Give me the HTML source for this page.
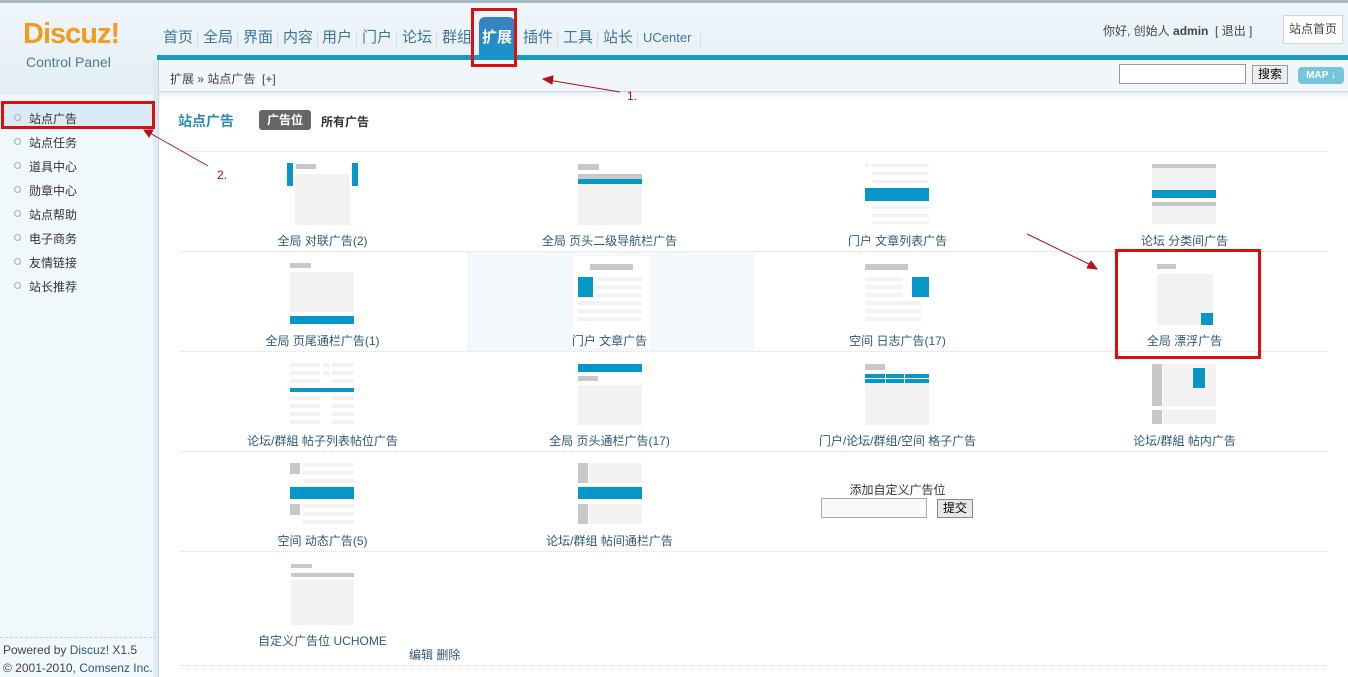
<!DOCTYPE html>
<html><head><meta charset="utf-8"><style>
*{margin:0;padding:0;box-sizing:border-box}
body{width:1348px;height:677px;position:relative;overflow:hidden;background:#fff;font-family:"Liberation Sans","Noto Sans CJK SC",sans-serif;font-size:12px;color:#333}
.a{position:absolute}
.r{position:absolute}
.b{background:#0796c8}.g{background:#c8c8c8}.l{background:#f2f2f2}
.ic{position:absolute;width:64px;height:62px}
.lab{position:absolute;width:287px;text-align:center;color:#2d5877;font-size:12px}
.hl{position:absolute;left:179px;width:1149px;border-top:1px dotted #dcdcdc;height:0}
.nv{position:absolute;top:29px;font-size:15px;color:#3c7598;line-height:18px;white-space:nowrap}
.sp{position:absolute;top:31px;width:1px;height:16px;background:#cfdde7}
.side div{position:absolute;left:14px;font-size:12px;color:#333}
.side div:before{content:"";display:inline-block;width:5px;height:5px;border:1px solid #aaa;border-radius:50%;margin-right:8px;vertical-align:2px}
.red{position:absolute;border:3px solid #d91010}
</style></head><body>
<!-- header -->
<div class="a" style="left:0;top:0;width:1348px;height:3px;background:#a6b8c6"></div>
<div class="a" style="left:0;top:3px;width:1348px;height:92px;background:linear-gradient(#f0f6fa,#e3eef6)"></div>
<div class="a" style="left:23px;top:18px;font-size:29px;font-weight:bold;color:#f39a1f;letter-spacing:-1px">Discuz!</div>
<div class="a" style="left:26px;top:54px;font-size:14px;color:#4a7a99">Control Panel</div>
<div class="a" style="left:479px;top:17px;width:36px;height:41px;background:linear-gradient(#3c7fbf,#1596cb);border-radius:6px 6px 0 0"></div>
<div class="nv" style="left:163px">首页</div><div class="sp" style="left:197px"></div>
<div class="nv" style="left:203px">全局</div><div class="sp" style="left:237px"></div>
<div class="nv" style="left:243px">界面</div><div class="sp" style="left:277px"></div>
<div class="nv" style="left:283px">内容</div><div class="sp" style="left:317px"></div>
<div class="nv" style="left:322px">用户</div><div class="sp" style="left:356px"></div>
<div class="nv" style="left:362px">门户</div><div class="sp" style="left:396px"></div>
<div class="nv" style="left:402px">论坛</div><div class="sp" style="left:436px"></div>
<div class="nv" style="left:442px">群组</div>
<div class="nv" style="left:482px;color:#fff;font-weight:bold">扩展</div>
<div class="nv" style="left:523px">插件</div><div class="sp" style="left:557px"></div>
<div class="nv" style="left:563px">工具</div><div class="sp" style="left:597px"></div>
<div class="nv" style="left:603px">站长</div><div class="sp" style="left:637px"></div>
<div class="nv" style="left:643px;font-size:13px">UCenter</div><div class="sp" style="left:700px"></div>
<div class="a" style="left:1103px;top:22px;font-size:12px;color:#444">你好, 创始人 <b>admin</b> &nbsp;[ 退出 ]</div>
<div class="a" style="left:1283px;top:15px;width:60px;height:29px;border:1px solid #c9d6e0;background:#fff;text-align:center;line-height:27px;color:#444">站点首页</div>
<div class="a" style="left:157px;top:55px;width:1191px;height:5px;background:#1a98c4"></div>
<div class="a" style="left:157px;top:60px;width:1191px;height:32px;background:#f0f6fa;border-bottom:1px solid #ccd9e2"></div>
<div class="a" style="left:157px;top:93px;width:1191px;height:8px;background:linear-gradient(#eef4f8,#fff)"></div>
<div class="a" style="left:170px;top:70px;color:#444">扩展 » 站点广告 &nbsp;[+]</div>
<div class="a" style="left:1119px;top:64px;width:127px;height:20px;border:1px solid #999;background:#fff"></div>
<div class="a" style="left:1252px;top:65px;width:36px;height:19px;border:1px solid #999;background:#eee;text-align:center;line-height:17px;color:#000">搜索</div>
<div class="a" style="left:1298px;top:67px;width:46px;height:17px;background:#74c5dd;border-radius:4px;color:#fff;font-size:10px;font-weight:bold;text-align:center;line-height:17px">MAP ↓</div>
<!-- sidebar -->
<div class="a" style="left:0;top:95px;width:157px;height:582px;background:#f1f8fc"></div>
<div class="a" style="left:153px;top:60px;width:6px;height:617px;background:#dbeaf5;border-right:1px solid #c4d8e6"></div>
<div class="a" style="left:3px;top:104px;width:150px;height:24px;background:#daeaf6"></div>
<div class="side">
<div style="top:110px">站点广告</div><div style="top:134px">站点任务</div><div style="top:158px">道具中心</div><div style="top:182px">勋章中心</div><div style="top:206px">站点帮助</div><div style="top:230px">电子商务</div><div style="top:254px">友情链接</div><div style="top:278px">站长推荐</div>
</div>
<div class="a" style="left:0;top:637px;width:157px;border-top:1px dashed #ccc"></div>
<div class="a" style="left:3px;top:643px;color:#444">Powered by <span style="color:#2d5877">Discuz!</span> X1.5</div>
<div class="a" style="left:3px;top:661px;color:#444;white-space:nowrap">© 2001-2010, <span style="color:#2d5877">Comsenz Inc.</span></div>
<!-- main -->
<div class="a" style="left:178px;top:111px;font-size:14px;font-weight:bold;color:#2a8bb5">站点广告</div>
<div class="a" style="left:259px;top:110px;width:52px;height:20px;background:#666;border-radius:3px;color:#fff;font-weight:bold;text-align:center;line-height:20px">广告位</div>
<div class="a" style="left:321px;top:113px;font-weight:bold;color:#333">所有广告</div>
<div class="hl" style="top:151px"></div><div class="hl" style="top:251px"></div><div class="hl" style="top:351px"></div><div class="hl" style="top:451px"></div><div class="hl" style="top:551px"></div><div class="hl" style="top:665px"></div>
<div class="a" style="left:467px;top:252px;width:287px;height:99px;background:#f3f8fc"></div>
<div class="a" style="left:573px;top:256px;width:76px;height:92px;background:#fff"></div>
<!-- row1 -->
<div class="ic" style="left:287px;top:163px;width:72px"><div class="r b" style="left:0;top:0;width:6px;height:23px"></div><div class="r g" style="left:9px;top:1px;width:20px;height:5px"></div><div class="r l" style="left:8px;top:11px;width:55px;height:51px"></div><div class="r b" style="left:65px;top:0;width:6px;height:23px"></div></div>
<div class="lab" style="left:179px;top:232px">全局 对联广告(2)</div>
<div class="ic" style="left:578px;top:163px"><div class="r g" style="left:0;top:1px;width:21px;height:6px"></div><div class="r g" style="left:0;top:11px;width:64px;height:5px"></div><div class="r b" style="left:0;top:16px;width:64px;height:5px"></div><div class="r l" style="left:0;top:21px;width:64px;height:41px"></div></div>
<div class="lab" style="left:466px;top:232px">全局 页头二级导航栏广告</div>
<div class="ic" style="left:865px;top:163px"><div class="r l" style="left:0;top:0;width:4px;height:4px"></div><div class="r l" style="left:7px;top:1px;width:57px;height:3px"></div><div class="r l" style="left:7px;top:9px;width:57px;height:3px"></div><div class="r l" style="left:7px;top:17px;width:57px;height:3px"></div><div class="r b" style="left:0;top:25px;width:64px;height:13px"></div><div class="r l" style="left:7px;top:43px;width:57px;height:3px"></div><div class="r l" style="left:7px;top:51px;width:57px;height:3px"></div><div class="r l" style="left:7px;top:58px;width:57px;height:3px"></div></div>
<div class="lab" style="left:754px;top:232px">门户 文章列表广告</div>
<div class="ic" style="left:1152px;top:163px"><div class="r g" style="left:0;top:1px;width:64px;height:4px"></div><div class="r l" style="left:0;top:5px;width:64px;height:21px"></div><div class="r b" style="left:0;top:27px;width:64px;height:8px"></div><div class="r g" style="left:0;top:39px;width:64px;height:4px"></div><div class="r l" style="left:0;top:43px;width:64px;height:18px"></div></div>
<div class="lab" style="left:1041px;top:232px">论坛 分类间广告</div>
<!-- row2 -->
<div class="ic" style="left:290px;top:263px"><div class="r g" style="left:0;top:0;width:21px;height:5px"></div><div class="r l" style="left:0;top:9px;width:64px;height:40px"></div><div class="r b" style="left:0;top:53px;width:64px;height:8px"></div></div>
<div class="lab" style="left:179px;top:332px">全局 页尾通栏广告(1)</div>
<div class="ic" style="left:578px;top:264px"><div class="r g" style="left:12px;top:0;width:43px;height:6px"></div><div class="r b" style="left:0;top:13px;width:15px;height:20px"></div><div class="r l" style="left:18px;top:13px;width:46px;height:4px"></div><div class="r l" style="left:18px;top:21px;width:46px;height:4px"></div><div class="r l" style="left:18px;top:29px;width:46px;height:4px"></div><div class="r l" style="left:0;top:37px;width:64px;height:4px"></div><div class="r l" style="left:0;top:45px;width:64px;height:4px"></div><div class="r l" style="left:0;top:53px;width:64px;height:4px"></div></div>
<div class="lab" style="left:466px;top:332px">门户 文章广告</div>
<div class="ic" style="left:865px;top:264px"><div class="r g" style="left:0;top:0;width:43px;height:6px"></div><div class="r b" style="left:47px;top:13px;width:17px;height:20px"></div><div class="r l" style="left:0;top:13px;width:38px;height:4px"></div><div class="r l" style="left:0;top:21px;width:38px;height:4px"></div><div class="r l" style="left:0;top:29px;width:38px;height:4px"></div><div class="r l" style="left:0;top:37px;width:56px;height:4px"></div><div class="r l" style="left:0;top:45px;width:56px;height:4px"></div><div class="r l" style="left:0;top:53px;width:56px;height:4px"></div></div>
<div class="lab" style="left:754px;top:332px">空间 日志广告(17)</div>
<div class="ic" style="left:1157px;top:264px"><div class="r g" style="left:0;top:0;width:19px;height:5px"></div><div class="r l" style="left:0;top:10px;width:56px;height:51px"></div><div class="r b" style="left:44px;top:49px;width:12px;height:12px"></div></div>
<div class="lab" style="left:1041px;top:332px">全局 漂浮广告</div>
<!-- row3 -->
<div class="ic" style="left:290px;top:363px"><div class="r l" style="left:0;top:0;width:30px;height:4px"></div><div class="r l" style="left:33px;top:0;width:6px;height:4px"></div><div class="r l" style="left:42px;top:0;width:22px;height:4px"></div><div class="r l" style="left:0;top:8px;width:30px;height:4px"></div><div class="r l" style="left:33px;top:8px;width:6px;height:4px"></div><div class="r l" style="left:42px;top:8px;width:22px;height:4px"></div><div class="r l" style="left:0;top:16px;width:30px;height:4px"></div><div class="r l" style="left:42px;top:16px;width:22px;height:4px"></div><div class="r b" style="left:0;top:25px;width:64px;height:4px"></div><div class="r l" style="left:0;top:33px;width:30px;height:4px"></div><div class="r l" style="left:42px;top:33px;width:22px;height:4px"></div><div class="r l" style="left:0;top:41px;width:30px;height:4px"></div><div class="r l" style="left:42px;top:41px;width:22px;height:4px"></div><div class="r l" style="left:0;top:49px;width:30px;height:4px"></div><div class="r l" style="left:42px;top:49px;width:22px;height:4px"></div><div class="r l" style="left:0;top:57px;width:30px;height:4px"></div><div class="r l" style="left:42px;top:57px;width:22px;height:4px"></div></div>
<div class="lab" style="left:179px;top:432px">论坛/群組 帖子列表帖位广告</div>
<div class="ic" style="left:578px;top:364px"><div class="r b" style="left:0;top:0;width:64px;height:8px"></div><div class="r g" style="left:0;top:12px;width:20px;height:5px"></div><div class="r l" style="left:0;top:21px;width:64px;height:40px"></div></div>
<div class="lab" style="left:466px;top:432px">全局 页头通栏广告(17)</div>
<div class="ic" style="left:865px;top:364px"><div class="r g" style="left:0;top:0;width:20px;height:6px"></div><div class="r b" style="left:0;top:10px;width:64px;height:9px"></div><div class="r" style="left:0;top:14px;width:64px;height:1px;background:#fff"></div><div class="r" style="left:20px;top:10px;width:1px;height:9px;background:#fff"></div><div class="r" style="left:39px;top:10px;width:1px;height:9px;background:#fff"></div><div class="r l" style="left:0;top:19px;width:64px;height:42px"></div></div>
<div class="lab" style="left:754px;top:432px">门户/论坛/群组/空间 格子广告</div>
<div class="ic" style="left:1152px;top:364px"><div class="r g" style="left:0;top:0;width:10px;height:42px"></div><div class="r l" style="left:11px;top:0;width:53px;height:42px"></div><div class="r b" style="left:41px;top:4px;width:12px;height:20px"></div><div class="r g" style="left:0;top:46px;width:10px;height:14px"></div><div class="r l" style="left:11px;top:46px;width:53px;height:14px"></div></div>
<div class="lab" style="left:1041px;top:432px">论坛/群組 帖内广告</div>
<!-- row4 -->
<div class="ic" style="left:290px;top:463px"><div class="r g" style="left:0;top:0;width:10px;height:11px"></div><div class="r l" style="left:13px;top:0;width:51px;height:4px"></div><div class="r l" style="left:13px;top:8px;width:51px;height:4px"></div><div class="r l" style="left:13px;top:16px;width:51px;height:4px"></div><div class="r b" style="left:0;top:24px;width:64px;height:12px"></div><div class="r g" style="left:0;top:41px;width:10px;height:11px"></div><div class="r l" style="left:13px;top:41px;width:51px;height:4px"></div><div class="r l" style="left:13px;top:49px;width:51px;height:4px"></div><div class="r l" style="left:13px;top:57px;width:51px;height:4px"></div></div>
<div class="lab" style="left:179px;top:532px">空间 动态广告(5)</div>
<div class="ic" style="left:578px;top:463px"><div class="r g" style="left:0;top:0;width:10px;height:20px"></div><div class="r l" style="left:11px;top:0;width:53px;height:20px"></div><div class="r b" style="left:0;top:24px;width:64px;height:12px"></div><div class="r g" style="left:0;top:41px;width:10px;height:20px"></div><div class="r l" style="left:11px;top:41px;width:53px;height:20px"></div></div>
<div class="lab" style="left:466px;top:532px">论坛/群组 帖间通栏广告</div>
<div class="a" style="left:754px;top:481px;width:287px;text-align:center;color:#333">添加自定义广告位</div>
<div class="a" style="left:821px;top:498px;width:106px;height:20px;border:1px solid #aaa;background:#fafafa"></div>
<div class="a" style="left:937px;top:499px;width:36px;height:19px;border:1px solid #888;background:#e8e8e8;text-align:center;line-height:17px;color:#000">提交</div>
<!-- row5 -->
<div class="ic" style="left:291px;top:564px"><div class="r g" style="left:0;top:0;width:21px;height:4px"></div><div class="r g" style="left:0;top:9px;width:63px;height:4px"></div><div class="r l" style="left:0;top:16px;width:63px;height:45px"></div></div>
<div class="lab" style="left:179px;top:632px">自定义广告位 UCHOME</div>
<div class="a" style="left:409px;top:646px;color:#2d5877">编辑 删除</div>
<!-- annotations -->
<div class="red" style="left:471px;top:8px;width:46px;height:59px"></div>
<div class="red" style="left:1px;top:101px;width:154px;height:28px"></div>
<div class="red" style="left:1115px;top:249px;width:146px;height:110px"></div>
<svg class="a" style="left:0;top:0" width="1348" height="677">
<g stroke="#b01020" stroke-width="1" fill="#c01010">
<line x1="620" y1="92" x2="548" y2="80"/><polygon points="543,79 553,76 552,84"/>
<line x1="208" y1="166" x2="148" y2="132"/><polygon points="144,130 153,130 149,137"/>
<line x1="1027" y1="234" x2="1093" y2="266"/><polygon points="1097,269 1087,268 1091,261"/>
</g></svg>
<div class="a" style="left:627px;top:89px;color:#a01010">1.</div>
<div class="a" style="left:217px;top:168px;color:#a01010">2.</div>
</body></html>
